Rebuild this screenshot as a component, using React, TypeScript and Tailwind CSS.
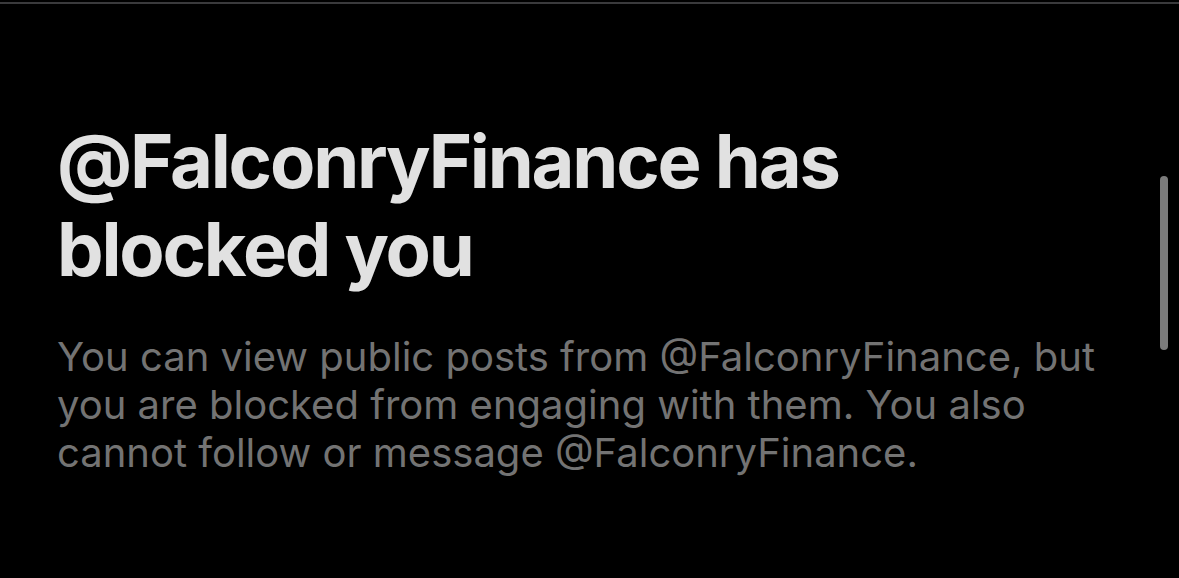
import React from "react";

const App = () => {
  return (
    <div className="relative h-[578px] w-[1179px] overflow-hidden bg-black font-['Inter',sans-serif]">
      {/* top divider */}
      <div className="h-[2px] w-full mt-[2px] bg-[#3a3a3c]" />

      <div className="pl-[57px] pr-[60px] pt-[113px]">
        <h1 className="text-[74px] leading-[88px] font-bold tracking-[-2.2px] text-[#e1e1e1]">
          @FalconryFinance has
          <br />
          blocked you
        </h1>
        <p className="mt-[40px] text-[40px] leading-[48px] text-[#737373]">
          You can view public posts from @FalconryFinance, but
          <br />
          you are blocked from engaging with them. You also
          <br />
          cannot follow or message @FalconryFinance.
        </p>
      </div>

      {/* scrollbar */}
      <div className="absolute left-[1160px] top-[176px] h-[174px] w-[8px] rounded-full bg-[#7b7b7b]" />
    </div>
  );
};

export default App;
